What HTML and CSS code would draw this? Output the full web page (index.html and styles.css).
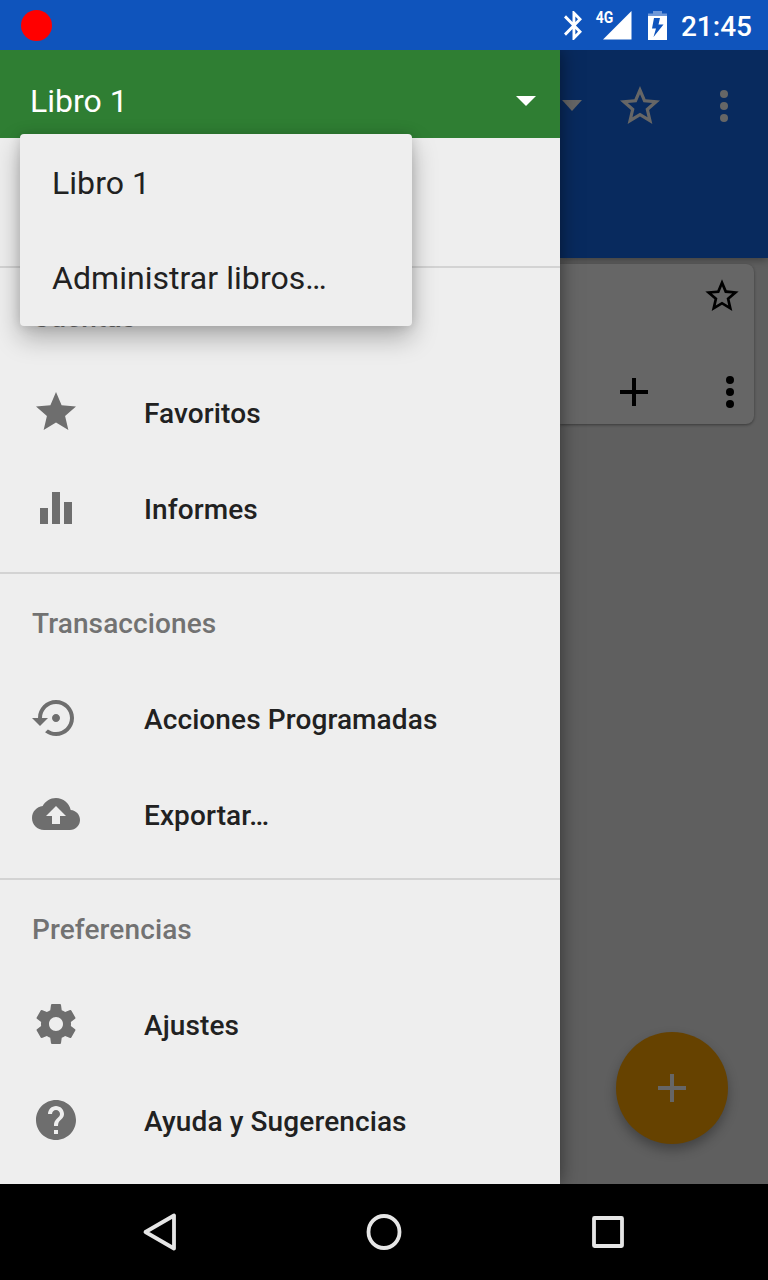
FILE: index.html
```html
<!DOCTYPE html>
<html lang="es">
<head>
<meta charset="utf-8">
<meta name="viewport" content="width=device-width, initial-scale=1">
<title>Libro 1</title>
<link rel="stylesheet" href="styles.css">
</head>
<body>
<div class="screen">
  <header class="status">
    <span class="rec"></span>
    <svg class="bluetooth" viewBox="5 2 12.7 20" preserveAspectRatio="none"><path d="M17.71 7.71L12 2h-1v7.59L6.41 5 5 6.41 10.59 12 5 17.59 6.41 19 11 14.41V22h1l5.71-5.71-4.3-4.29 4.3-4.29zM13 5.83l1.88 1.88L13 9.59V5.83zm1.88 10.46L13 18.17v-3.76l1.88 1.88z"/></svg>
    <svg class="signal" viewBox="-2 -5 38 40"><path d="M7 29.500L35.500 1v28.500z"/><text x="-.3" y="13" textLength="17.500" lengthAdjust="spacingAndGlyphs">4G</text></svg>
    <svg class="battery" viewBox="0 0 19 29"><path class="faint" d="M5 0h9v2.500h5V5H0V2.500h5z"/><path fill-rule="evenodd" d="M0 5h19v24H0zM12 7H6L4 17.500h4L5.500 26 15.500 13.500h-5z"/></svg>
    <time class="clock">21:45</time>
  </header>

  <main class="main">
    <aside class="drawer">
      <div class="book">
        <span>Libro 1</span>
        <svg class="caret" viewBox="0 0 20 10"><path d="M0 0h20L10 10z"/></svg>
        <div class="menu">
          <div class="option">Libro 1</div>
          <div class="option">Administrar libros…</div>
        </div>
      </div>
      <div class="spacer"></div>
      <section class="group">
        <h2>Cuentas</h2>
        <div class="item"><svg class="icon" viewBox="0 0 24 24"><path d="M12 17.270L18.180 21l-1.640-7.030L22 9.240l-7.190-.61L12 2 9.190 8.630 2 9.240l5.460 4.730L5.820 21z"/></svg><span>Favoritos</span></div>
        <div class="item"><svg class="icon" viewBox="0 0 24 24"><path d="M4 12h4v8H4zM10 4h4v16h-4zM16 9h4v11h-4z"/></svg><span>Informes</span></div>
      </section>
      <section class="group">
        <h2>Transacciones</h2>
        <div class="item"><svg class="icon" viewBox="0 0 24 24"><path d="M14 12c0-1.100-.9-2-2-2s-2 .9-2 2 .9 2 2 2 2-.9 2-2zm-2-9c-4.970 0-9 4.030-9 9H0l4 4 4-4H5c0-3.870 3.130-7 7-7s7 3.130 7 7-3.130 7-7 7c-1.510 0-2.910-.49-4.060-1.300l-1.420 1.440C8.040 20.300 9.940 21 12 21c4.970 0 9-4.030 9-9s-4.030-9-9-9z"/></svg><span>Acciones Programadas</span></div>
        <div class="item"><svg class="icon" viewBox="0 0 24 24"><path d="M19.350 10.040C18.670 6.590 15.640 4 12 4 9.110 4 6.600 5.640 5.350 8.040 2.340 8.360 0 10.910 0 14c0 3.310 2.690 6 6 6h13c2.760 0 5-2.240 5-5 0-2.640-2.050-4.780-4.650-4.960zM14 13v4h-4v-4H7l5-5 5 5h-3z"/></svg><span>Exportar…</span></div>
      </section>
      <section class="group">
        <h2>Preferencias</h2>
        <div class="item"><svg class="icon" viewBox="0 0 24 24"><path d="M19.430 12.980c.04-.32.07-.64.07-.98s-.03-.66-.07-.98l2.110-1.650c.19-.15.24-.42.12-.64l-2-3.460c-.12-.22-.39-.3-.61-.22l-2.490 1c-.52-.4-1.080-.73-1.690-.98l-.38-2.650C14.460 2.180 14.250 2 14 2h-4c-.25 0-.46.18-.49.42l-.38 2.650c-.61.25-1.170.59-1.690.98l-2.490-1c-.23-.09-.49 0-.61.22l-2 3.460c-.13.22-.07.49.12.64l2.110 1.650c-.04.32-.07.65-.07.98s.03.66.07.98l-2.110 1.650c-.19.15-.24.42-.12.64l2 3.460c.12.22.39.3.61.22l2.490-1c.52.4 1.080.73 1.690.98l.38 2.650c.03.24.24.42.49.42h4c.25 0 .46-.18.49-.42l.38-2.650c.61-.25 1.170-.59 1.690-.98l2.490 1c.23.09.49 0 .61-.22l2-3.460c.12-.22.07-.49-.12-.64l-2.110-1.650zM12 15.500c-1.930 0-3.500-1.570-3.500-3.500s1.570-3.500 3.500-3.500 3.500 1.570 3.500 3.500-1.570 3.500-3.500 3.500z"/></svg><span>Ajustes</span></div>
        <div class="item"><svg class="icon" viewBox="0 0 24 24"><path d="M12 2C6.480 2 2 6.480 2 12s4.480 10 10 10 10-4.480 10-10S17.520 2 12 2zm1 17h-2v-2h2v2zm2.070-7.750l-.9.92C13.450 12.900 13 13.500 13 15h-2v-.5c0-1.100.45-2.100 1.170-2.830l1.240-1.260c.37-.36.59-.86.59-1.410 0-1.100-.9-2-2-2s-2 .9-2 2H8c0-2.210 1.790-4 4-4s4 1.790 4 4c0 .88-.36 1.680-.93 2.250z"/></svg><span>Ayuda y Sugerencias</span></div>
      </section>
    </aside>

    <div class="page">
      <div class="toolbar">
        <svg class="caret" viewBox="0 0 20 11"><path d="M0 0h20L10 11z"/></svg>
        <svg class="icon" viewBox="0 0 24 24"><path d="M22 9.240l-7.190-.62L12 2 9.190 8.630 2 9.240l5.460 4.730L5.820 21 12 17.270 18.180 21l-1.630-7.030L22 9.240zM12 15.400l-3.760 2.270 1-4.280-3.320-2.880 4.380-.38L12 6.100l1.710 4.040 4.380.38-3.320 2.880 1 4.280L12 15.400z"/></svg>
        <svg class="icon" viewBox="0 0 24 24"><circle cx="12" cy="6" r="2"/><circle cx="12" cy="12" r="2"/><circle cx="12" cy="18" r="2"/></svg>
      </div>
      <div class="card">
        <svg class="card-star" viewBox="0 0 24 24"><path d="M22 9.240l-7.190-.62L12 2 9.190 8.630 2 9.240l5.460 4.730L5.820 21 12 17.270 18.180 21l-1.630-7.030L22 9.240zM12 15.400l-3.760 2.270 1-4.280-3.320-2.880 4.380-.38L12 6.100l1.710 4.040 4.380.38-3.320 2.880 1 4.280L12 15.400z"/></svg>
        <div class="card-actions">
          <svg class="icon" viewBox="0 0 24 24"><path d="M19 13h-6v6h-2v-6H5v-2h6V5h2v6h6z"/></svg>
          <svg class="icon" viewBox="0 0 24 24"><circle cx="12" cy="6" r="2"/><circle cx="12" cy="12" r="2"/><circle cx="12" cy="18" r="2"/></svg>
        </div>
      </div>
      <div class="fab"><svg class="icon" viewBox="0 0 24 24"><path d="M19 13h-6v6h-2v-6H5v-2h6V5h2v6h6z"/></svg></div>
    </div>
  </main>

  <nav class="navbar">
    <svg viewBox="0 0 48 48"><path d="M9.500 24L38 7.500v33z"/></svg>
    <svg viewBox="0 0 48 48"><ellipse cx="24" cy="24" rx="15.500" ry="16"/></svg>
    <svg viewBox="0 0 48 48"><rect x="10" y="10" width="28" height="28" rx=".5"/></svg>
  </nav>
</div>
</body>
</html>
```
FILE: styles.css
```css
* { box-sizing: border-box; }

body {
  margin: 0;
  font-family: Roboto, "Noto Sans", sans-serif;
  color: #212121;
}

svg { display: block; flex: none; fill: currentColor; }

.screen {
  width: 768px;
  height: 1280px;
  display: flex;
  flex-direction: column;
  overflow: hidden;
}

.status {
  height: 50px;
  display: flex;
  align-items: center;
  padding: 0 16px 0 21px;
  background: #0f54bc;
  color: #fff;
}

.rec {
  width: 31px;
  height: 31px;
  border-radius: 50%;
  background: #f00;
  margin-right: auto;
}

.bluetooth { width: 18px; height: 29px; margin-right: 12px; }
.signal { width: 38px; height: 40px; margin-right: 16px; }
.signal text { font: 700 16px Roboto, sans-serif; }
.battery { width: 19px; height: 29px; margin-right: 14px; }
.faint { opacity: .4; }

.clock {
  font-size: 28px;
  font-weight: 500;
  line-height: 32px;
  padding-top: 3px;
}

.main {
  height: 1134px;
  display: flex;
  overflow: hidden;
}

.drawer {
  position: relative;
  z-index: 1;
  width: 560px;
  background: #eee;
  box-shadow: 0 0 18px rgba(0, 0, 0, .5);
}

.book {
  position: relative;
  height: 88px;
  padding: 14px 24px 0 30px;
  display: flex;
  align-items: center;
  justify-content: space-between;
  background: #2f7e33;
  color: #fff;
  font-size: 32px;
}

.book .caret { width: 20px; height: 10px; }

.menu {
  position: absolute;
  z-index: 2;
  left: 20px;
  top: 84px;
  width: 392px;
  height: 192px;
  border-radius: 4px;
  background: #eee;
  color: #212121;
  letter-spacing: .05px;
  box-shadow: 0 12px 26px rgba(0, 0, 0, .28), 0 0 12px rgba(0, 0, 0, .14);
}

.option {
  height: 96px;
  padding: 0 32px;
  line-height: 98px;
}

.option + .option { line-height: 96px; }

.spacer { height: 128px; }

.group {
  border-top: 2px solid #d3d3d3;
  padding: 0 32px 16px;
  font-size: 28px;
  font-weight: 500;
  letter-spacing: .11px;
}

.group h2 {
  height: 96px;
  margin: 0;
  font: inherit;
  line-height: 100px;
  color: #727272;
}

.item {
  height: 96px;
  display: flex;
  align-items: center;
  gap: 64px;
}

.item span { padding-top: 2px; }

.icon { width: 48px; height: 48px; }
.item .icon { color: #6e6e6e; }

.page {
  width: 208px;
  display: flex;
  flex-direction: column;
  background: #5f5f5f;
}

.toolbar {
  height: 208px;
  padding: 32px 20px 0 2px;
  display: flex;
  align-items: flex-start;
  background: #082a5e;
  color: #666;
  box-shadow: 0 2px 8px rgba(0, 0, 0, .35);
}

.toolbar .caret { width: 20px; height: 11px; margin: 18px 34px 0 0; }
.toolbar .icon + .icon { margin-left: 36px; }

.card {
  height: 160px;
  width: 194px;
  margin-top: 6px;
  padding: 12px 0 8px;
  display: flex;
  flex-direction: column;
  align-items: flex-end;
  justify-content: space-between;
  border-radius: 0 8px 8px 0;
  background: #666;
  color: #000;
  box-shadow: 0 1px 3px rgba(0, 0, 0, .4);
}

.card-star { width: 40px; height: 40px; margin-right: 12px; }
.card-actions { display: flex; gap: 48px; }

.fab {
  width: 112px;
  height: 112px;
  margin: auto 40px 40px auto;
  display: grid;
  place-items: center;
  border-radius: 50%;
  background: #664200;
  color: #666;
  box-shadow: 0 6px 12px rgba(0, 0, 0, .3);
}

.navbar {
  height: 96px;
  display: flex;
  justify-content: center;
  align-items: center;
  gap: 176px;
  background: #000;
}

.navbar svg {
  width: 48px;
  height: 48px;
  fill: none;
  stroke: #e6e6e6;
  stroke-width: 3.8;
  stroke-linejoin: round;
}
```
